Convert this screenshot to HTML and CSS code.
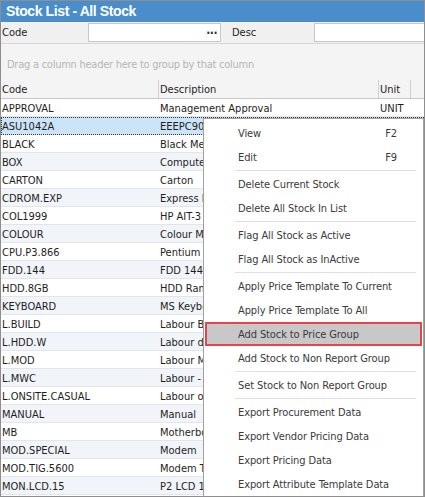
FILE: index.html
```html
<!DOCTYPE html>
<html>
<head>
<meta charset="utf-8">
<link rel="stylesheet" href="styles.css">
</head>
<body>
<div class="window">
  <div class="titlebar">Stock List - All Stock</div>
  <div class="filters">
    <span class="flabel">Code</span>
    <div class="finput code-input"><span class="dots">···</span></div>
    <span class="flabel desc-label">Desc</span>
    <div class="finput desc-input"></div>
  </div>
  <div class="grouppanel">Drag a column header here to group by that column</div>
  <div class="grid">
    <div class="row header">
      <div class="cell">Code</div>
      <div class="cell sep">Description</div>
      <div class="cell sep">Unit</div>
      <div class="cell sep"></div>
    </div>
    <div class="row"><div class="cell">APPROVAL</div><div class="cell">Management Approval</div><div class="cell">UNIT</div><div class="cell"></div></div>
    <div class="row alt selected"><div class="cell">ASU1042A</div><div class="cell">EEEPC901</div><div class="cell"></div><div class="cell"></div></div>
    <div class="row"><div class="cell">BLACK</div><div class="cell">Black Metal</div><div class="cell"></div><div class="cell"></div></div>
    <div class="row alt"><div class="cell">BOX</div><div class="cell">Computer Box</div><div class="cell"></div><div class="cell"></div></div>
    <div class="row"><div class="cell">CARTON</div><div class="cell">Carton</div><div class="cell"></div><div class="cell"></div></div>
    <div class="row alt"><div class="cell">CDROM.EXP</div><div class="cell">Express Drive</div><div class="cell"></div><div class="cell"></div></div>
    <div class="row"><div class="cell">COL1999</div><div class="cell">HP AIT-3</div><div class="cell"></div><div class="cell"></div></div>
    <div class="row alt"><div class="cell">COLOUR</div><div class="cell">Colour Monitor</div><div class="cell"></div><div class="cell"></div></div>
    <div class="row"><div class="cell">CPU.P3.866</div><div class="cell">Pentium III</div><div class="cell"></div><div class="cell"></div></div>
    <div class="row alt"><div class="cell">FDD.144</div><div class="cell">FDD 1440</div><div class="cell"></div><div class="cell"></div></div>
    <div class="row"><div class="cell">HDD.8GB</div><div class="cell">HDD Ram</div><div class="cell"></div><div class="cell"></div></div>
    <div class="row alt"><div class="cell">KEYBOARD</div><div class="cell">MS Keyboard</div><div class="cell"></div><div class="cell"></div></div>
    <div class="row"><div class="cell">L.BUILD</div><div class="cell">Labour Build</div><div class="cell"></div><div class="cell"></div></div>
    <div class="row alt"><div class="cell">L.HDD.W</div><div class="cell">Labour drive</div><div class="cell"></div><div class="cell"></div></div>
    <div class="row"><div class="cell">L.MOD</div><div class="cell">Labour Mod</div><div class="cell"></div><div class="cell"></div></div>
    <div class="row alt"><div class="cell">L.MWC</div><div class="cell">Labour - MWC</div><div class="cell"></div><div class="cell"></div></div>
    <div class="row"><div class="cell">L.ONSITE.CASUAL</div><div class="cell">Labour onsite</div><div class="cell"></div><div class="cell"></div></div>
    <div class="row alt"><div class="cell">MANUAL</div><div class="cell">Manual</div><div class="cell"></div><div class="cell"></div></div>
    <div class="row"><div class="cell">MB</div><div class="cell">Motherboard</div><div class="cell"></div><div class="cell"></div></div>
    <div class="row alt"><div class="cell">MOD.SPECIAL</div><div class="cell">Modem</div><div class="cell"></div><div class="cell"></div></div>
    <div class="row"><div class="cell">MOD.TIG.5600</div><div class="cell">Modem TIG</div><div class="cell"></div><div class="cell"></div></div>
    <div class="row alt"><div class="cell">MON.LCD.15</div><div class="cell">P2 LCD 15</div><div class="cell"></div><div class="cell"></div></div>
  </div>
  <div class="menu">
    <div class="item"><span>View</span><span class="key">F2</span></div>
    <div class="item"><span>Edit</span><span class="key">F9</span></div>
    <div class="msep"></div>
    <div class="item"><span>Delete Current Stock</span></div>
    <div class="item"><span>Delete All Stock In List</span></div>
    <div class="msep"></div>
    <div class="item"><span>Flag All Stock as Active</span></div>
    <div class="item"><span>Flag All Stock as InActive</span></div>
    <div class="msep"></div>
    <div class="item"><span>Apply Price Template To Current</span></div>
    <div class="item"><span>Apply Price Template To All</span></div>
    <div class="item hot"><span>Add Stock to Price Group</span></div>
    <div class="item"><span>Add Stock to Non Report Group</span></div>
    <div class="msep"></div>
    <div class="item"><span>Set Stock to Non Report Group</span></div>
    <div class="msep"></div>
    <div class="item"><span>Export Procurement Data</span></div>
    <div class="item"><span>Export Vendor Pricing Data</span></div>
    <div class="item"><span>Export Pricing Data</span></div>
    <div class="item"><span>Export Attribute Template Data</span></div>
  </div>
</div>
</body>
</html>
```
FILE: styles.css
```css
html, body {
  margin: 0;
  padding: 0;
  background: #ffffff;
}
body {
  font-family: "DejaVu Sans Condensed", "DejaVu Sans", sans-serif;
  font-size: 11px;
  color: #1e1e1e;
}
.window {
  position: relative;
  width: 425px;
  height: 497px;
  box-sizing: border-box;
  border: 1px solid #8e8e8e;
  overflow: hidden;
  background: #ffffff;
}
.titlebar {
  height: 21px;
  background: #4a8dcb;
  color: #ffffff;
  font-family: "Liberation Sans", Arial, sans-serif;
  font-weight: bold;
  font-size: 14px;
  letter-spacing: -0.4px;
  line-height: 21px;
  padding-left: 5px;
}
.filters {
  height: 21px;
  background: #f0f0f0;
  display: flex;
  align-items: center;
  border-bottom: 1px solid #d8d8d8;
}
.flabel {
  width: 87px;
  padding-left: 1px;
  box-sizing: border-box;
}
.desc-label {
  width: 93px;
  padding-left: 11px;
}
.finput {
  height: 19px;
  box-sizing: border-box;
  border: 1px solid #c8c8c8;
  background: #ffffff;
}
.code-input {
  width: 133px;
  display: flex;
  justify-content: flex-end;
  align-items: center;
}
.dots {
  padding-right: 3px;
  color: #333;
  font-size: 12px;
  font-weight: bold;
  letter-spacing: -0.5px;
  line-height: 12px;
}
.desc-input {
  flex: 1;
  margin-right: -2px;
}
.grouppanel {
  height: 36px;
  background: #f4f4f4;
  color: #b4b4b4;
  line-height: 42px;
  padding-left: 6px;
  letter-spacing: -0.25px;
  box-sizing: border-box;
}
.grid {
  display: flex;
  flex-direction: column;
}
.row {
  display: grid;
  grid-template-columns: 157px 220px 32px 1fr;
  height: 18px;
  box-sizing: border-box;
  border-bottom: 1px solid #e2e5ea;
  line-height: 17px;
  background: #ffffff;
}
.row.alt {
  background: #f1f4f9;
}
.row.header {
  background: #f4f4f4;
  border-bottom: 1px solid #c8c8c8;
  height: 19px;
  line-height: 19px;
}
.row.header .sep {
  border-left: 1px solid #d0d0d0;
}
.cell {
  padding-left: 1px;
  padding-top: 1px;
  white-space: nowrap;
  overflow: hidden;
}
.row.header .cell {
  padding-top: 0;
}
.row .cell:nth-child(2),
.row .cell:nth-child(3) {
  padding-left: 2px;
}
.row.header .cell:nth-child(2),
.row.header .cell:nth-child(3) {
  padding-left: 1px;
}
.row.selected {
  background: #cce4f7;
  outline: 1px dotted #333;
  outline-offset: -1px;
}
.menu {
  position: absolute;
  left: 202px;
  top: 117px;
  width: 221px;
  height: 380px;
  box-sizing: border-box;
  background: #ffffff;
  border: 1px solid #a0a0a0;
  padding: 2px 1px;
  color: #3a3a3a;
  letter-spacing: -0.1px;
  display: flex;
  flex-direction: column;
}
.item {
  height: 24px;
  flex: none;
  box-sizing: border-box;
  display: flex;
  align-items: center;
  justify-content: space-between;
  padding-left: 33px;
  padding-right: 25px;
}
.item.hot {
  background: #c8c8c8;
  border: 2px solid #e8434b;
  padding-left: 31px;
}
.msep {
  height: 3px;
  flex: none;
  margin-left: 30px;
  margin-right: 6px;
  display: flex;
  align-items: center;
}
.msep::before {
  content: "";
  display: block;
  width: 100%;
  height: 1px;
  background: #e0e0e0;
}
```
